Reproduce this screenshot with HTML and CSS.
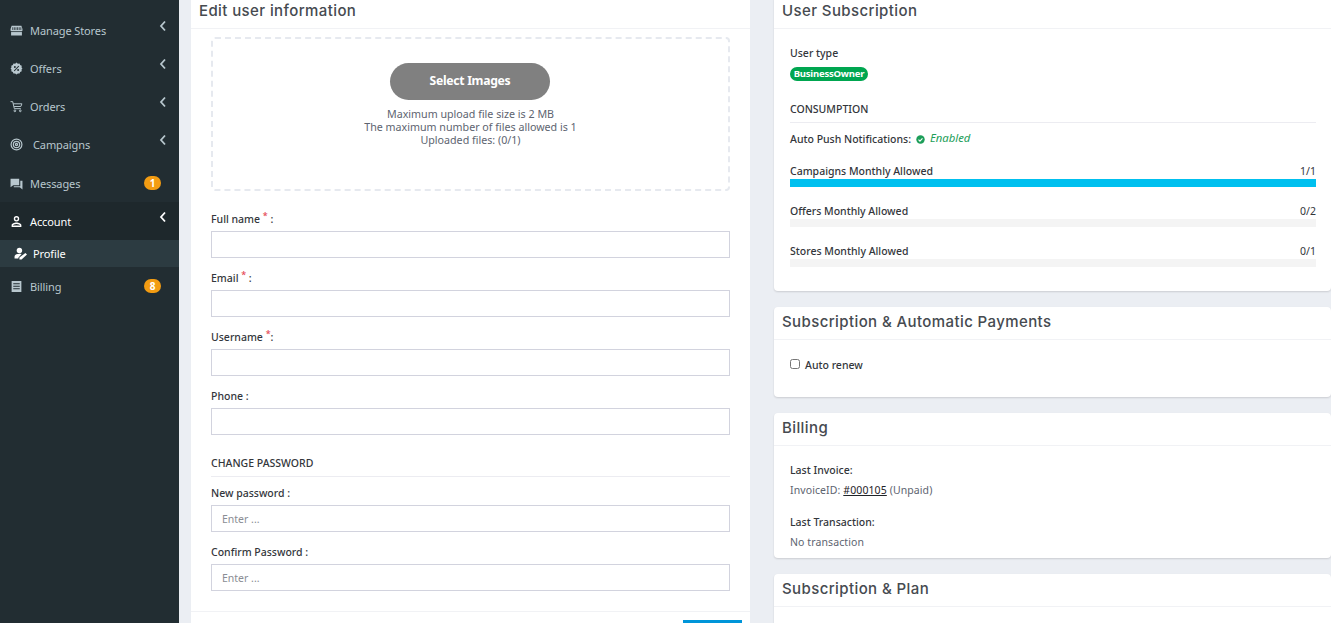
FILE: index.html
```html
<!DOCTYPE html>
<html lang="en">
<head>
<meta charset="utf-8">
<title>Profile</title>
<link rel="stylesheet" href="styles.css">
</head>
<body>
<div class="app">
  <aside class="sidebar">
    <nav class="menu">
      <a class="item first"><svg class="ico" viewBox="0 0 24 24"><path d="M3 3h18l2 6v3a3 3 0 0 1-1 1.500V21H2v-7.500A3 3 0 0 1 1 12V9z"/><path class="cut" d="M5 6v5M8 6v5M11 6v5M14 6v5M17 6v5M20 6v5M1 14h22" /></svg><span class="lbl">Manage Stores</span><svg class="chev" viewBox="0 0 8 12"><path d="M6 1.500 2 6l4 4.500"/></svg></a>
      <a class="item"><svg class="ico" viewBox="0 0 24 24"><path fill-rule="evenodd" d="m12 1 2.500 2 3.200-.4 1 3 3 1.200-.4 3.200L23 12l-1.700 2 .4 3.200-3 1.200-1 3-3.200-.4L12 23l-2.500-2-3.200.4-1-3-3-1.200.4-3.200L1 12l1.700-2-.4-3.200 3-1.200 1-3 3.200.4zM9 7.500a1.800 1.800 0 1 0 0 3.600 1.800 1.800 0 0 0 0-3.600zm6 5.400a1.800 1.800 0 1 0 0 3.600 1.800 1.800 0 0 0 0-3.600zM15.500 7 7 16l1.500 1L17 8z"/></svg><span class="lbl">Offers</span><svg class="chev" viewBox="0 0 8 12"><path d="M6 1.500 2 6l4 4.500"/></svg></a>
      <a class="item"><svg class="ico line thin" viewBox="0 0 24 24"><path d="M1 3h4l3 13h12M6 7h16l-2 5H7.500"/><circle cx="9" cy="20" r="1.600"/><circle cx="19" cy="20" r="1.600"/></svg><span class="lbl">Orders</span><svg class="chev" viewBox="0 0 8 12"><path d="M6 1.500 2 6l4 4.500"/></svg></a>
      <a class="item"><svg class="ico line" viewBox="0 0 24 24"><circle cx="12" cy="12" r="10"/><circle cx="12" cy="12" r="5.800"/><circle cx="12" cy="12" r="2"/></svg><span class="lbl wide">Campaigns</span><svg class="chev" viewBox="0 0 8 12"><path d="M6 1.500 2 6l4 4.500"/></svg></a>
      <a class="item msg"><svg class="ico" viewBox="0 0 24 24"><path d="M1 3h16v12H6l-5 4z"/><path d="M19 7h4v16l-5-4H7v-2h12z"/></svg><span class="lbl">Messages</span><span class="pill">1</span></a>
      <a class="item open"><svg class="ico" viewBox="0 0 24 24"><path fill-rule="evenodd" d="M12 2a5 5 0 1 1 0 10 5 5 0 0 1 0-10zm0 2.500a2.500 2.500 0 1 0 0 5 2.500 2.500 0 0 0 0-5zM12 14c4 0 9 2 9 5v3H3v-3c0-3 5-5 9-5zm0 2.500c-3 0-6.500 1.400-6.500 2.500v.5h13V19c0-1.100-3.500-2.500-6.500-2.500z"/></svg><span class="lbl">Account</span><svg class="chev" viewBox="0 0 8 12"><path d="M6 1.500 2 6l4 4.500"/></svg></a>
      <a class="sub"><svg class="ico" viewBox="0 0 24 24"><circle cx="10" cy="6.500" r="5"/><path d="M1 21v-3c0-3.500 4-5.500 9-5.500 1.500 0 3 .2 4 .6L8 20v1zM21 11l3 3-10 9h-4v-3.500z"/></svg><span class="lbl">Profile</span></a>
      <a class="item bill"><svg class="ico" viewBox="0 0 24 24"><path fill-rule="evenodd" d="M3 2h18v20H3zm3 4v2h12V6zm0 4.500v2h12v-2zm0 4.500v2h12v-2z"/></svg><span class="lbl">Billing</span><span class="pill">8</span></a>
    </nav>
  </aside>

  <main class="main">
    <section class="card left">
      <h2 class="card-title">Edit user information</h2>
      <div class="form-body">
        <div class="drop">
          <button class="select" type="button">Select Images</button>
          <p>Maximum upload file size is 2 MB</p>
          <p>The maximum number of files allowed is 1</p>
          <p>Uploaded files: (0/1)</p>
        </div>
        <label class="field"><span>Full name <sup>*</sup> :</span><input type="text"></label>
        <label class="field"><span>Email <sup>*</sup> :</span><input type="text"></label>
        <label class="field"><span>Username <sup>*</sup>:</span><input type="text"></label>
        <label class="field"><span>Phone :</span><input type="text"></label>
        <h3 class="section">CHANGE PASSWORD</h3>
        <label class="field pw"><span>New password :</span><input type="text" placeholder="Enter ..."></label>
        <label class="field"><span>Confirm Password :</span><input type="text" placeholder="Enter ..."></label>
      </div>
      <div class="form-foot"><button class="save" type="button"></button></div>
    </section>

    <div class="right">
      <section class="card sub-card">
        <h2 class="card-title">User Subscription</h2>
        <div class="body b1">
          <div class="strong">User type</div>
          <span class="badge">BusinessOwner</span>
          <h3 class="section cons">CONSUMPTION</h3>
          <div class="push"><span class="strong">Auto Push Notifications:</span>
            <svg class="ok" viewBox="0 0 16 16"><circle cx="8" cy="8" r="7.500"/><path d="m4.500 8.300 2.500 2.500 4.500-5"/></svg>
            <em>Enabled</em></div>
          <div class="usage"><div class="row"><span>Campaigns Monthly Allowed</span><span class="n">1/1</span></div><div class="track"><div class="fill" style="width:100%"></div></div></div>
          <div class="usage"><div class="row"><span>Offers Monthly Allowed</span><span class="n">0/2</span></div><div class="track"></div></div>
          <div class="usage"><div class="row"><span>Stores Monthly Allowed</span><span class="n">0/1</span></div><div class="track"></div></div>
        </div>
      </section>
      <section class="card renew">
        <h2 class="card-title">Subscription &amp; Automatic Payments</h2>
        <label class="auto"><input type="checkbox"><span>Auto renew</span></label>
      </section>
      <section class="card billing">
        <h2 class="card-title">Billing</h2>
        <div class="body b3">
          <div class="strong">Last Invoice:</div>
          <div class="val">InvoiceID: <a class="inv">#000105</a> (Unpaid)</div>
          <div class="strong gap">Last Transaction:</div>
          <div class="val">No transaction</div>
        </div>
      </section>
      <section class="card plan">
        <h2 class="card-title">Subscription &amp; Plan</h2>
      </section>
    </div>
  </main>
</div>
</body>
</html>
```
FILE: styles.css
```css
* { box-sizing: border-box; }
html, body { margin: 0; height: 100%; overflow: hidden; background: #fff; }
body { font-family: "Noto Sans", "Open Sans", sans-serif; font-size: 11px; color: #3f4047; }

.app { display: flex; width: 1331px; height: 623px; overflow: hidden; background: #ebeef3; }

/* Sidebar */
.sidebar { width: 179px; flex: none; background: #222d32; }
.menu { display: flex; flex-direction: column; padding-top: 11px; }
.item { display: flex; align-items: center; height: 38px; padding: 0 12px 0 10px; color: #b8c7ce; font-size: 11px; letter-spacing: -.1px; }
.item .lbl { margin-left: 7px; flex: 1; }
.item .lbl.wide { margin-left: 10px; }
.ico { width: 13px; height: 13px; flex: none; fill: #b8c7ce; }
.ico .cut { fill: none; stroke: #222d32; stroke-width: 1.500; }
.ico.line { fill: none; stroke: #b8c7ce; stroke-width: 2.200; }
.ico.thin { stroke-width: 1.800; }
.chev { width: 8px; height: 12px; fill: none; stroke: #b8c7ce; stroke-width: 1.800; margin-top: -8px; }
.pill { width: 17px; height: 14px; margin: -1px 6px 0 0; border-radius: 7px; background: #f39c12; color: #fff; font-size: 10px; font-weight: 700; line-height: 14px; text-align: center; }
.msg { height: 39px; padding-top: 2px; }
.open { background: #1e282c; color: #fff; }
.open .ico { fill: #fff; }
.open .chev { stroke: #fff; }
.sub { display: flex; align-items: center; height: 27px; padding-left: 14px; background: #2c3b41; color: #fff; font-size: 11px; letter-spacing: -.1px; }
.sub .ico { fill: #fff; }
.sub .lbl { margin-left: 6px; }
.bill { height: 38px; }

/* Main */
.main { flex: 1; display: flex; gap: 24px; padding: 0 0 0 12px; align-items: flex-start; }
.card { background: #fff; border-radius: 4px; box-shadow: 0 1px 2px rgba(0, 0, 0, .14); }
.card-title { margin: 0; height: 33px; padding: 0 8px; font-family: "Inter", "Open Sans", sans-serif; font-size: 15px; font-weight: 500; line-height: 30px; letter-spacing: .4px; color: #464a50; border-bottom: 1px solid #f1f2f5; }

.left { width: 559px; height: 640px; margin-top: -4px; flex: none; border-radius: 0; box-shadow: none; }
.form-body { padding: 8px 20px 0; }
.drop { height: 154px; border: 2px dashed #e6e9ef; border-radius: 4px; padding-top: 24px; text-align: center; color: #5d6470; line-height: 13px; font-size: 10.700px; }
.drop p { margin: 0; }
.select { display: block; width: 160px; height: 37px; margin: 0 0 8px 177px; padding: 0 0 2px; border: 0; border-radius: 19px; background: #808080; color: #fff; font: 700 12.200px/35px "Noto Sans", sans-serif; letter-spacing: -.3px; }

.field { display: block; margin-top: 12px; }
.field span { display: block; height: 20px; line-height: 16px; font-weight: 500; color: #33363b; font-size: 10.500px; }
.field sup { color: #e4404e; font-size: 9px; line-height: 0; }
.field input { display: block; width: 100%; height: 27px; padding: 0 10px; border: 1px solid #d2d3de; background: #fff; font: 10.500px "Noto Sans", sans-serif; outline: 0; }
.field input::placeholder { color: #8a8d94; }
.drop + .field { margin-top: 20px; }
.section { margin: 0; font-size: 10.500px; font-weight: 500; color: #33363b; }
.form-body > .section { margin-top: 20px; height: 22px; line-height: 16px; border-bottom: 1px solid #ececf1; }
.pw { margin-top: 8px; }
.form-foot { margin-top: 20px; border-top: 1px solid #f1f2f5; padding: 8px 8px 0 0; display: flex; justify-content: flex-end; }
.save { width: 59px; height: 30px; border: 0; background: #0095d9; }

.right { flex: 1; display: flex; flex-direction: column; gap: 16px; margin-top: -4px; }
.body { padding-left: 16px; padding-right: 15px; }
.strong { font-weight: 500; color: #33363b; font-size: 10.500px; }
.b1 { height: 262px; padding-top: 16px; }
.b1 > .strong { line-height: 16px; }
.badge { display: inline-block; margin-top: 6px; width: 78px; height: 14px; border-radius: 7px; background: #00a650; color: #fff; text-align: center; font-size: 9.500px; font-weight: 700; line-height: 14px; vertical-align: top; letter-spacing: -.2px; }
.cons { margin-top: 20px; height: 22px; line-height: 16px; border-bottom: 1px solid #ececf1; }
.push { display: flex; align-items: center; margin-top: 8px; height: 16px; gap: 5px; font-size: 10.500px; }
.ok { width: 9px; height: 9px; fill: #1c9e59; }
.ok path { fill: none; stroke: #fff; stroke-width: 2; }
.push em { color: #1c9e59; font-size: 11.300px; line-height: 14px; margin-bottom: 2px; }
.usage { margin-top: 16px; }
.row { display: flex; justify-content: space-between; height: 16px; line-height: 16px; font-size: 10.500px; font-weight: 500; color: #33363b; }
.row .n { font-weight: 400; }
.track { height: 8px; background: #f4f4f4; }
.fill { height: 100%; background: #00c0ef; }
.renew { height: 90px; }
.auto { display: flex; align-items: center; gap: 5px; padding: 18px 16px; font-size: 10.500px; font-weight: 500; color: #33363b; }
.auto input { width: 10px; height: 10px; margin: 0 0 2px; }
.billing { height: 145px; }
.b3 { padding-top: 16px; }
.b3 .strong, .b3 .val { height: 16px; line-height: 16px; }
.val { margin-top: 4px; font-size: 10.500px; color: #5d6470; letter-spacing: .1px; }
.gap { margin-top: 16px; }
.inv { color: #1f2328; text-decoration: underline; }
.plan { height: 60px; }
```
